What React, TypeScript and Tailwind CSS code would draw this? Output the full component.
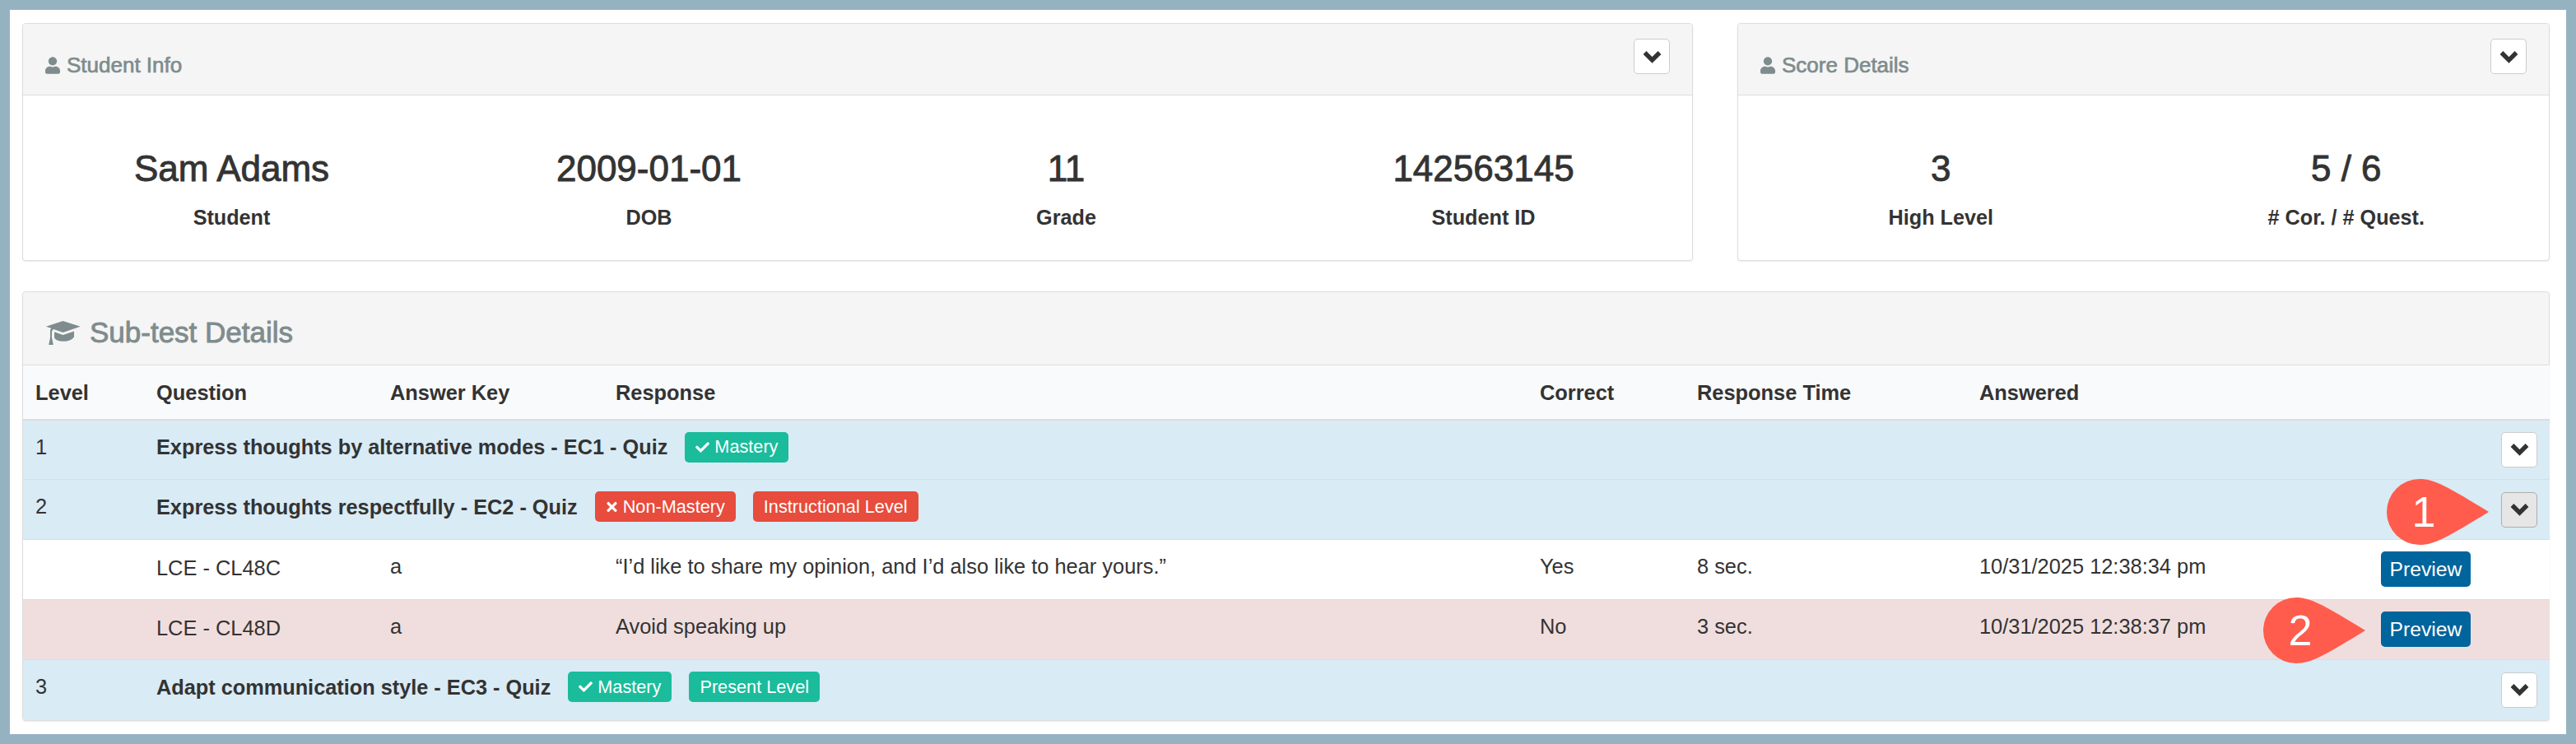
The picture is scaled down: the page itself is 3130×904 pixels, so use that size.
import type { ReactNode } from 'react'
import { FaCheck, FaTimes, FaUser } from 'react-icons/fa'

function Chevron() {
	return (
		<svg width="23" height="16" viewBox="0 0 23 16" fill="none">
			<path d="M2.5 3 L11.5 12 L20.5 3" stroke="#333333" strokeWidth="5.4" />
		</svg>
	)
}

function ToggleButton({ active }: { active?: boolean }) {
	return (
		<button
			className={
				active
					? 'flex h-[43px] w-[44px] items-center justify-center rounded-[5px] border border-[#adadad] bg-[#e6e6e6]'
					: 'flex h-[43px] w-[44px] items-center justify-center rounded-[5px] border border-[#cccccc] bg-white'
			}
		>
			<Chevron />
		</button>
	)
}

function CapIcon() {
	return (
		<svg width="42" height="29" viewBox="0 0 42 29" fill="#7f8c8d">
			<path d="M0 6.7 L20.5 0 L41.7 6.7 L20.5 14 L9 10 Q7.5 11 7 13 V20 L8.8 29 H3.2 L5 20 V11.6 Q5 9.6 6.5 8.9 Z" />
			<path d="M10 13.2 L20.5 17 L34 12.6 V19.5 Q30 24.8 21 24.8 Q13 24.8 10 20.5 Z" />
		</svg>
	)
}

function Stat({ value, label }: { value: string; label: string }) {
	return (
		<div className="text-center">
			<div className="text-[44px] leading-[50px] text-[#333] [-webkit-text-stroke:0.9px_#333]">{value}</div>
			<div className="mt-[16px] text-[25.2px] leading-[36px] font-bold text-[#333]">{label}</div>
		</div>
	)
}

function SummaryPanel({
	title,
	className,
	gridClass,
	stats,
}: {
	title: string
	className: string
	gridClass: string
	stats: { value: string; label: string }[]
}) {
	return (
		<div className={`rounded-[4px] border border-[#dddddd] bg-white shadow-[0_1px_2px_rgba(0,0,0,0.08)] ${className}`}>
			<div className="flex h-[87px] items-start justify-between rounded-t-[4px] border-b border-[#dddddd] bg-[#f5f5f5] pr-[27px] pl-[27px]">
				<div className="mt-[35px] flex items-center gap-[8px] text-[26px] leading-[30px] text-[#7f8c8d] [-webkit-text-stroke:0.7px_#7f8c8d]">
					<FaUser className="h-[21px] w-[18px]" />
					{title}
				</div>
				<div className="mt-[18px]">
					<ToggleButton />
				</div>
			</div>
			<div className={`grid pt-[64px] pb-[34px] ${gridClass}`}>
				{stats.map((stat) => (
					<Stat key={stat.label} value={stat.value} label={stat.label} />
				))}
			</div>
		</div>
	)
}

function Badge({ color, children }: { color: 'green' | 'red'; children: ReactNode }) {
	return (
		<span
			className={
				color === 'green'
					? 'flex h-[37px] items-center gap-[6px] rounded-[5px] bg-[#1abc9c] px-[13px] text-[21.7px] text-white'
					: 'flex h-[37px] items-center gap-[6px] rounded-[5px] bg-[#e74c3c] px-[13px] text-[21.7px] text-white'
			}
		>
			{children}
		</span>
	)
}

function GroupRow({ level, title, children, active }: { level: string; title: string; children: ReactNode; active?: boolean }) {
	return (
		<tr className="h-[73px] bg-[#d9ebf5]">
			<td className="border-t border-[#d5dfe6] pt-[14px] pl-[15px] align-top">{level}</td>
			<td colSpan={6} className="border-t border-[#d5dfe6] pt-[14px] pl-[15px] align-top">
				<div className="flex items-center gap-[21px]">
					<span className="text-[25.3px] font-bold">{title}</span>
					{children}
				</div>
			</td>
			<td className="border-t border-[#d5dfe6] pr-[15px] align-middle">
				<div className="flex justify-end">
					<ToggleButton active={active} />
				</div>
			</td>
		</tr>
	)
}

function AnswerRow({
	question,
	response,
	correct,
	time,
	answered,
	wrong,
}: {
	question: string
	response: string
	correct: string
	time: string
	answered: string
	wrong?: boolean
}) {
	const cell = 'border-t border-[#dddddd] pt-[14px] pl-[15px] align-top'
	return (
		<tr className={wrong ? 'h-[73px] bg-[#f0dede]' : 'h-[73px] bg-white'}>
			<td className={cell}></td>
			<td className={cell}>
				<div className="pt-[2px]">{question}</div>
			</td>
			<td className={cell}>a</td>
			<td className={cell}>{response}</td>
			<td className={cell}>{correct}</td>
			<td className={cell}>{time}</td>
			<td className={cell}>{answered}</td>
			<td className="border-t border-[#dddddd] pt-[14px] pl-[15px] align-top">
				<button className="h-[43px] w-[109px] rounded-[5px] bg-[#00659c] text-[24.7px] leading-[43px] text-white">Preview</button>
			</td>
		</tr>
	)
}

function Callout({ number, className }: { number: string; className: string }) {
	return (
		<div className={`absolute flex h-[80px] w-[124px] ${className}`}>
			<svg width="124" height="80" viewBox="0 0 124 80" className="absolute top-0 left-0" fill="#ff5c4d">
				<path d="M40 0 C58 0 75 10 124 40 C75 70 58 80 40 80 A40 40 0 0 1 40 0 Z" />
			</svg>
			<span className="relative w-[90px] text-center text-[52px] leading-[80px] text-white">{number}</span>
		</div>
	)
}

export default function App() {
	return (
		<div className="h-[904px] w-[3130px] bg-[#95b2c0] p-[12px] font-['Liberation_Sans',Arial,sans-serif] text-[#333]">
			<div className="h-full bg-white pt-[16px] pr-[20px] pl-[15px]">
				<div className="flex gap-[54px]">
					<SummaryPanel
						title="Student Info"
						className="w-[2030px]"
						gridClass="grid-cols-4"
						stats={[
							{ value: 'Sam Adams', label: 'Student' },
							{ value: '2009-01-01', label: 'DOB' },
							{ value: '11', label: 'Grade' },
							{ value: '142563145', label: 'Student ID' },
						]}
					/>
					<SummaryPanel
						title="Score Details"
						className="flex-1"
						gridClass="grid-cols-2"
						stats={[
							{ value: '3', label: 'High Level' },
							{ value: '5 / 6', label: '# Cor. / # Quest.' },
						]}
					/>
				</div>

				<div className="relative mt-[37px] rounded-[4px] border border-[#dddddd] bg-white shadow-[0_1px_2px_rgba(0,0,0,0.08)]">
					<div className="flex h-[88px] items-center gap-[11px] rounded-t-[4px] bg-[#f5f5f5] pt-[10px] pl-[28px] text-[35px] text-[#7f8c8d] [-webkit-text-stroke:0.9px_#7f8c8d]">
						<CapIcon />
						Sub-test Details
					</div>
					<table className="w-full table-fixed border-collapse text-left text-[25.4px] leading-[36px] text-[#333]">
						<colgroup>
							<col className="w-[147px]" />
							<col className="w-[284px]" />
							<col className="w-[274px]" />
							<col className="w-[1123px]" />
							<col className="w-[191px]" />
							<col className="w-[343px]" />
							<col className="w-[488px]" />
							<col className="w-[220px]" />
						</colgroup>
						<thead>
							<tr className="h-[66px] border-t border-b-2 border-[#dddddd] bg-[#f9fafb]">
								<th className="pt-[2px] pl-[15px] font-bold">Level</th>
								<th className="pt-[2px] pl-[15px] font-bold">Question</th>
								<th className="pt-[2px] pl-[15px] font-bold">Answer Key</th>
								<th className="pt-[2px] pl-[15px] font-bold">Response</th>
								<th className="pt-[2px] pl-[15px] font-bold">Correct</th>
								<th className="pt-[2px] pl-[15px] font-bold">Response Time</th>
								<th className="pt-[2px] pl-[15px] font-bold">Answered</th>
								<th></th>
							</tr>
						</thead>
						<tbody>
							<GroupRow level="1" title="Express thoughts by alternative modes - EC1 - Quiz">
								<Badge color="green">
									<FaCheck className="h-[17px] w-[17px]" />
									Mastery
								</Badge>
							</GroupRow>
							<GroupRow level="2" title="Express thoughts respectfully - EC2 - Quiz" active>
								<Badge color="red">
									<FaTimes className="h-[18px] w-[15px]" />
									Non-Mastery
								</Badge>
								<Badge color="red">Instructional Level</Badge>
							</GroupRow>
							<AnswerRow
								question="LCE - CL48C"
								response="“I’d like to share my opinion, and I’d also like to hear yours.”"
								correct="Yes"
								time="8 sec."
								answered="10/31/2025 12:38:34 pm"
							/>
							<AnswerRow
								question="LCE - CL48D"
								response="Avoid speaking up"
								correct="No"
								time="3 sec."
								answered="10/31/2025 12:38:37 pm"
								wrong
							/>
							<GroupRow level="3" title="Adapt communication style - EC3 - Quiz">
								<Badge color="green">
									<FaCheck className="h-[17px] w-[17px]" />
									Mastery
								</Badge>
								<Badge color="green">Present Level</Badge>
							</GroupRow>
						</tbody>
					</table>
					<Callout number="1" className="top-[227px] left-[2872px]" />
					<Callout number="2" className="top-[371px] left-[2722px]" />
				</div>
			</div>
		</div>
	)
}
